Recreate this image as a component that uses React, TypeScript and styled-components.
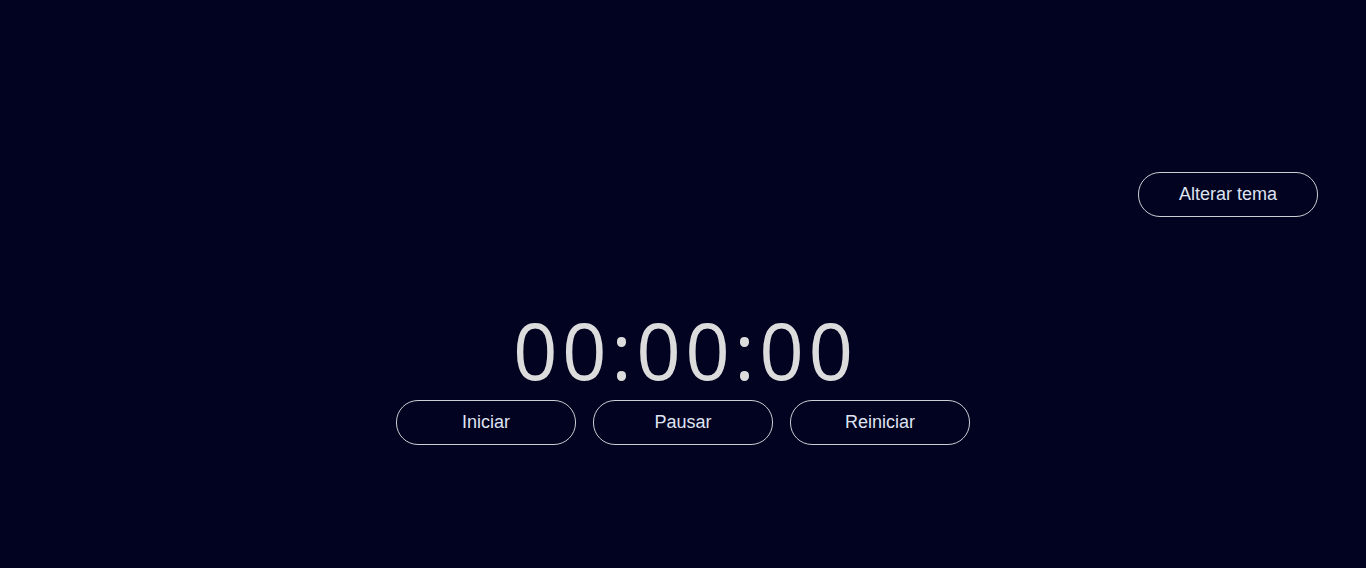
import React from 'react';
import styled, { createGlobalStyle } from 'styled-components';

const GlobalStyle = createGlobalStyle`
  html, body {
    margin: 0;
    padding: 0;
    background: #020320;
  }
  body {
    font-family: 'Liberation Sans', Arial, sans-serif;
  }
`;

const Page = styled.main`
  min-height: 568px;
  display: flex;
  flex-direction: column;
  background: #020320;
  padding: 172px 48px 0;
  box-sizing: border-box;
`;

const TopBar = styled.header`
  display: flex;
  justify-content: flex-end;
`;

const Stopwatch = styled.section`
  display: flex;
  flex-direction: column;
  align-items: center;
  margin-top: 84px;
`;

const Display = styled.div`
  font-family: 'Open Sans', 'Noto Sans', sans-serif;
  font-size: 78px;
  line-height: 99px;
  letter-spacing: 4.5px;
  color: #dcdcdc;
  margin-right: -4.5px;
`;

const Controls = styled.div`
  display: flex;
  gap: 17px;
`;

const PillButton = styled.button`
  width: 180px;
  height: 45px;
  border: 1px solid #cdcdd4;
  border-radius: 22px;
  background: transparent;
  color: #dfe3f2;
  font-family: 'Liberation Sans', Arial, sans-serif;
  font-size: 18px;
  cursor: pointer;
`;

export default function App() {
  return (
    <>
      <GlobalStyle />
      <Page>
        <TopBar>
          <PillButton>Alterar tema</PillButton>
        </TopBar>
        <Stopwatch>
          <Display>00:00:00</Display>
          <Controls>
            <PillButton>Iniciar</PillButton>
            <PillButton>Pausar</PillButton>
            <PillButton>Reiniciar</PillButton>
          </Controls>
        </Stopwatch>
      </Page>
    </>
  );
}
